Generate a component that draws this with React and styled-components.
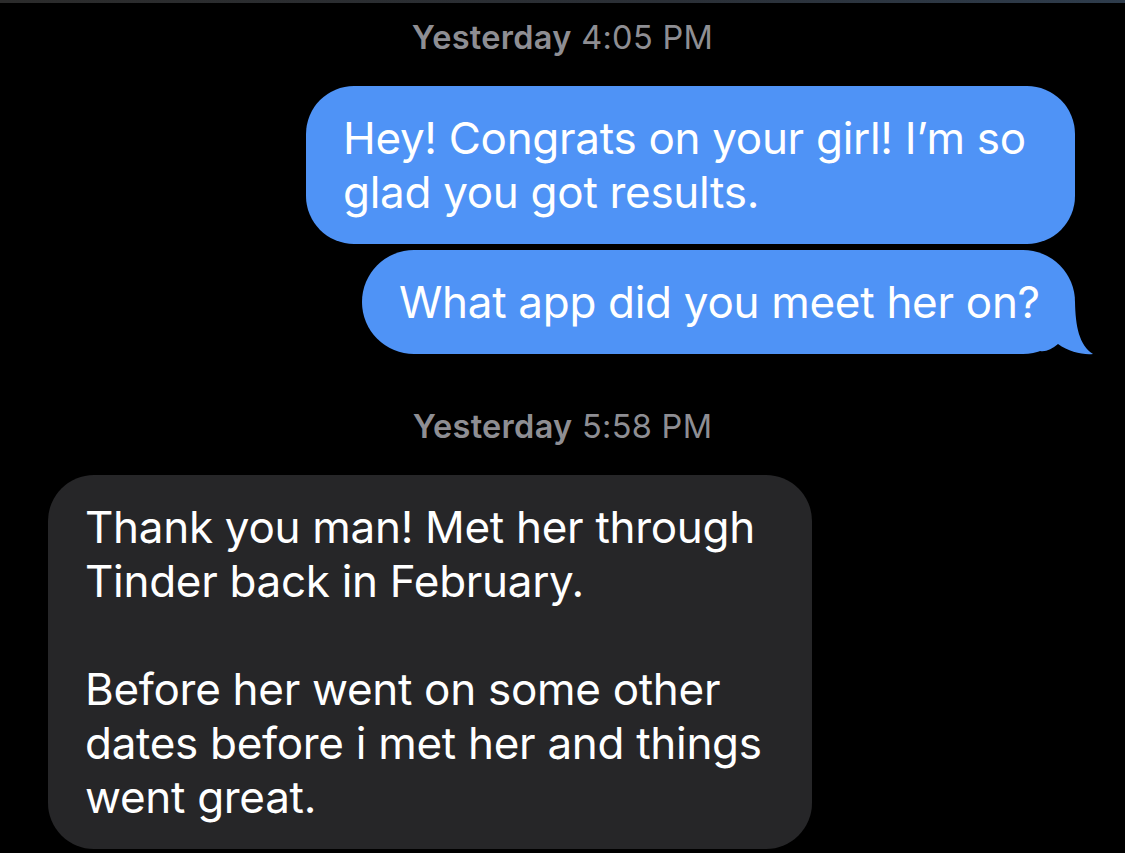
import React from "react";
import styled, { createGlobalStyle } from "styled-components";

const Global = createGlobalStyle`
  html, body { margin: 0; padding: 0; background: #000; }
  body { font-family: Inter, "Noto Sans", sans-serif; -webkit-font-smoothing: antialiased; }
`;

const Screen = styled.div`
  width: 1125px;
  height: 853px;
  background: #000;
  overflow: hidden;
  display: flex;
  flex-direction: column;
`;

const TopBar = styled.div`
  height: 3px;
  flex: none;
  background: linear-gradient(90deg, #2b2b2b 0%, #2a2f36 60%, #2e3c4c 100%);
`;

const Thread = styled.div`
  display: flex;
  flex-direction: column;
`;

const Stamp = styled.div`
  margin-top: ${(p) => p.$top}px;
  height: 40px;
  line-height: 40px;
  text-align: center;
  font-size: 32.5px;
  color: #8e8e93;
  letter-spacing: 0.3px;
  b { font-weight: 600; }
`;

const Bubble = styled.div`
  position: relative;
  box-sizing: border-box;
  width: ${(p) => p.$w}px;
  margin-top: ${(p) => p.$top}px;
  align-self: ${(p) => (p.$sent ? "flex-end" : "flex-start")};
  margin-right: ${(p) => (p.$sent ? "50px" : "0")};
  margin-left: ${(p) => (p.$sent ? "0" : "48px")};
  padding: 25px 20px 25px 37px;
  border-radius: ${(p) => p.$r}px;
  background: ${(p) => (p.$sent ? "#4f93f6" : "#262628")};
  color: #fff;
  font-size: 44px;
  line-height: 54px;
  letter-spacing: -0.3px;
  white-space: pre;
`;

const Tail = styled.svg`
  position: absolute;
  left: calc(100% - 35px);
  bottom: 0;
  width: 53px;
  height: 52px;
  overflow: visible;
`;

function SentTail() {
  return (
    <Tail viewBox="0 0 53 52">
      <path
        d="M0 0 H35 C35.5 24 39 43 53 52 C43 53 29 50 18 42 C12 47 6 50 0 49 Z"
        fill="#4f93f6"
      />
    </Tail>
  );
}

export default function App() {
  return (
    <Screen>
      <Global />
      <TopBar />
      <Thread>
        <Stamp $top={15}>
          <b>Yesterday</b> 4:05 PM
        </Stamp>
        <Bubble $sent $w={769} $top={28} $r={48}>
          {"Hey! Congrats on your girl! I’m so\nglad you got results."}
        </Bubble>
        <Bubble $sent $w={713} $top={6} $r={52}>
          {"What app did you meet her on?"}
          <SentTail />
        </Bubble>
        <Stamp $top={53}>
          <b>Yesterday</b> 5:58 PM
        </Stamp>
        <Bubble $w={764} $top={28} $r={46}>
          {"Thank you man! Met her through\nTinder back in February.\n\nBefore her went on some other\ndates before i met her and things\nwent great."}
        </Bubble>
      </Thread>
    </Screen>
  );
}
